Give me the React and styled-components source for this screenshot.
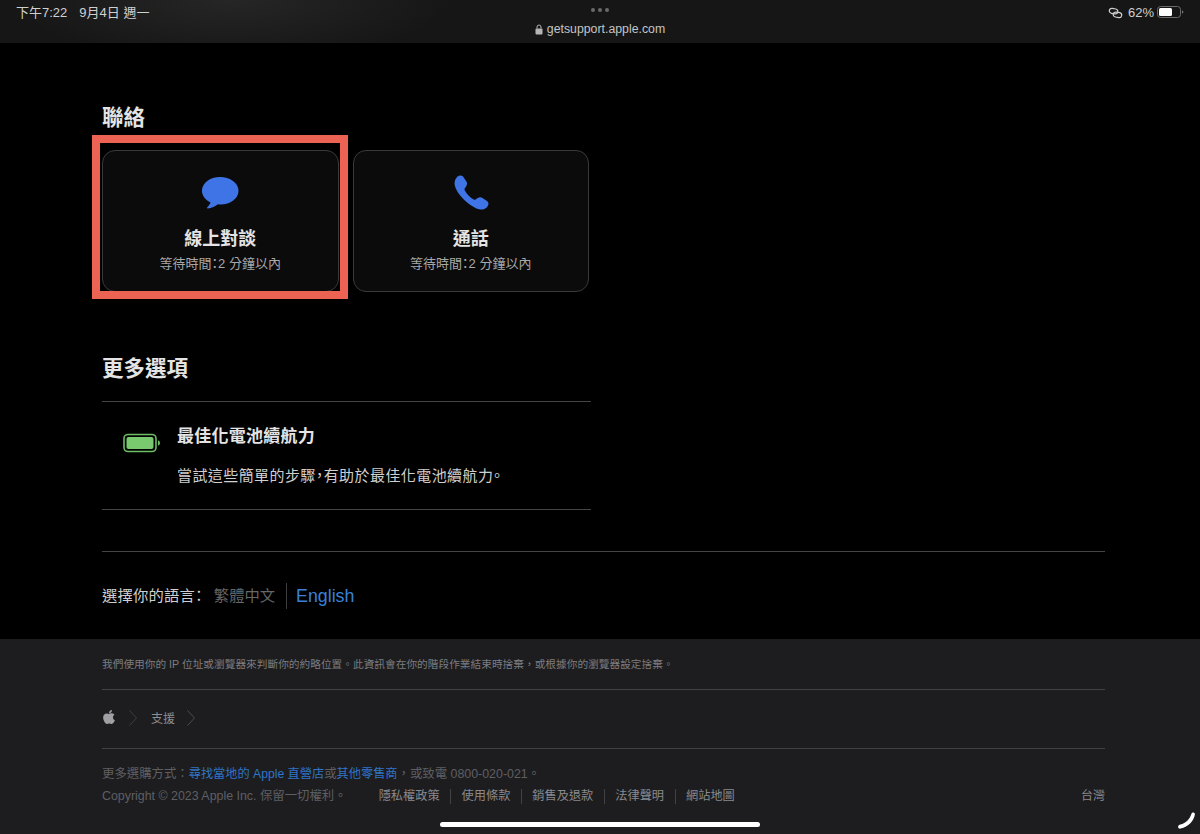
import styled, { createGlobalStyle } from 'styled-components';
import { FaApple } from 'react-icons/fa';

const GlobalStyle = createGlobalStyle`
  html, body {
    margin: 0;
    padding: 0;
    background: #000;
  }
  body {
    font-family: "Liberation Sans", "Noto Sans CJK TC", sans-serif;
  }
`;

const Page = styled.div`
  width: 1200px;
  height: 834px;
  overflow: hidden;
  position: relative;
  display: flex;
  flex-direction: column;
`;

const StatusBar = styled.div`
  height: 43px;
  flex: none;
  position: relative;
  display: flex;
  justify-content: space-between;
  padding: 5px 16px 0 16px;
  box-sizing: border-box;
  color: #d0d0d0;
  font-size: 13px;
  line-height: 15px;
  background: radial-gradient(ellipse 220px 60px at 230px 0, #262626 0%, #161616 100%);
`;

const Clock = styled.div`
  display: flex;
  gap: 12px;
  white-space: pre;
`;

const StatusRight = styled.div`
  display: flex;
  align-items: flex-start;
  gap: 3px;
  font-size: 13px;
`;

const Center = styled.div`
  position: absolute;
  left: 0;
  right: 0;
  top: 8px;
  display: flex;
  flex-direction: column;
  align-items: center;
`;

const Dots = styled.div`
  display: flex;
  gap: 3px;
  height: 7px;
  & > i {
    width: 4px;
    height: 4px;
    border-radius: 50%;
    background: #6a6a6a;
  }
`;

const Url = styled.div`
  display: flex;
  align-items: center;
  gap: 4px;
  margin-top: 7px;
  color: #c4c4c4;
  font-size: 12.3px;
  line-height: 14px;
`;

const Main = styled.main`
  flex: 1;
  background: #000;
  padding: 60px 95px 0 102px;
`;

const SectionTitle = styled.h2`
  margin: 0;
  color: #e4e4e4;
  font-size: 21.5px;
  line-height: 30px;
  font-weight: 700;
`;

const Cards = styled.div`
  display: flex;
  gap: 14px;
  margin: 17px 0 62px;
`;

const Card = styled.div`
  position: relative;
  width: 236.5px;
  height: 142px;
  box-sizing: border-box;
  border: 1px solid #3a3a3a;
  border-radius: 13px;
  background: #0b0b0b;
  display: flex;
  flex-direction: column;
  align-items: center;
  padding-top: 23px;
`;

const IconSlot = styled.div`
  height: 38px;
  display: flex;
  align-items: center;
  justify-content: center;
`;

const CardTitle = styled.div`
  margin-top: 15px;
  color: #e4e4e4;
  font-size: 18px;
  line-height: 24px;
  font-weight: 700;
`;

const CardSub = styled.div`
  margin-top: 4px;
  color: #a8a8a8;
  font-size: 13px;
  line-height: 18px;
  font-feature-settings: "palt";
`;

const Highlight = styled.div`
  position: absolute;
  left: -11px;
  top: -16px;
  width: 256px;
  height: 164px;
  box-sizing: border-box;
  border: 8px solid #ec6353;
  pointer-events: none;
`;

const OptionList = styled.div`
  width: 489px;
  margin-top: 17px;
  border-top: 1px solid #444;
  border-bottom: 1px solid #444;
  height: 109px;
  box-sizing: border-box;
  display: flex;
`;

const OptionIcon = styled.div`
  width: 75px;
  flex: none;
  padding: 31px 0 0 21px;
  box-sizing: border-box;
`;

const OptionBody = styled.div`
  padding-top: 24px;
`;

const OptionTitle = styled.div`
  color: #e4e4e4;
  font-size: 17px;
  line-height: 22px;
  letter-spacing: 0.25px;
  font-weight: 700;
`;

const OptionText = styled.div`
  margin-top: 17px;
  color: #cfcfcf;
  font-size: 15px;
  line-height: 22px;
  letter-spacing: 0.42px;
  font-feature-settings: "palt";
`;

const LanguageRow = styled.div`
  margin-top: 41px;
  border-top: 1px solid #444;
  padding-top: 31px;
  display: flex;
  align-items: center;
  font-size: 15.3px;
  line-height: 26px;
  color: #cfcfcf;
`;

const LangLabel = styled.span`
  font-feature-settings: "palt";
  letter-spacing: 0.2px;
`;

const LangCurrent = styled.span`
  margin-left: 11px;
  padding-right: 11px;
  color: #666;
  border-right: 1px solid #3c3c3c;
`;

const LangLink = styled.span`
  margin-left: 9px;
  color: #3a80d8;
  font-size: 17.8px;
`;

const Footer = styled.footer`
  height: 195px;
  flex: none;
  background: #1d1d1f;
  padding: 0 95px 0 102px;
  font-size: 11px;
  color: #6e6e73;
`;

const Notice = styled.div`
  height: 51px;
  padding-top: 18px;
  box-sizing: border-box;
  line-height: 15px;
  color: #7c7c80;
  font-size: 10.7px;
  border-bottom: 1px solid #424245;
`;

const Crumbs = styled.div`
  height: 59px;
  box-sizing: border-box;
  display: flex;
  align-items: center;
  gap: 11px;
  padding-bottom: 3px;
  border-bottom: 1px solid #424245;
  color: #8e8e92;
  font-size: 12px;
`;

const AppleMark = styled(FaApple)`
  margin-left: -1px;
  margin-right: 1px;
  margin-top: -2px;
  color: #a0a0a4;
`;

const CrumbLabel = styled.span`
  margin: 0 1px 0 3px;
`;

const Legal = styled.div`
  margin-top: 18px;
  line-height: 15px;
  font-size: 12.4px;
  color: #5f5f63;
`;

const FooterLink = styled.span`
  color: #2f75c8;
  font-size: 12.2px;
`;

const LegalRow = styled.div`
  margin-top: 7px;
  display: flex;
  align-items: center;
`;

const LegalLinks = styled.div`
  display: flex;
  margin-left: 32px;
  flex: 1;
  font-size: 12.2px;
`;

const LegalLink = styled.span`
  color: #8a8a8e;
  padding: 0 10.5px;
  border-left: 1px solid #424245;
  &:first-child {
    border-left: none;
    padding-left: 0;
  }
`;

const Region = styled.span`
  color: #8a8a8e;
  font-size: 12px;
`;

const HomeBar = styled.div`
  position: absolute;
  left: 440px;
  bottom: 7px;
  width: 320px;
  height: 5px;
  border-radius: 3px;
  background: #fff;
`;

const Corner = styled.svg`
  position: absolute;
  right: 4px;
  bottom: 5px;
`;

const LinkSvg = styled.svg`
  margin: 1px 2px 0 0;
`;

const BubbleIcon = () => (
  <svg width="38" height="35" viewBox="0 0 40 36">
    <path
      fill="#3f74e6"
      d="M20 0.5C9.5 0.5 1 7 1 15c0 5.2 3.6 9.8 9 12.300c-.6 2-2 3.900-3.400 5.200-.5.500-.2 1.300.5 1.200 4-.3 8-1.800 10.700-4.300 .9.100 1.800.2 2.700.2 10.500 0 19-6.500 19-14.600S30.500.5 20 .5z"
    />
  </svg>
);

const PhoneIcon = () => (
  <svg width="36" height="36" viewBox="-1 0 36 36">
    <path
      fill="#3f74e6"
      d="M3.300 1.800C5 .3 7.600 0 9 1.600l3.400 5c1 1.500.8 3.200-.2 4.600l-1.500 2.200c-.4.600-.4 1.100 0 1.800 1.900 3.500 5.300 7.200 9 9.300 .7.400 1.300.4 1.900 0l2.100-1.500c1.500-1 3.300-1.100 4.800-.1l4.800 3.300c1.700 1.300 1.500 3.700 0 5.500-1.500 1.800-3.800 3.100-6.300 2.900C17.500 33.800 1.600 19 .6 9.300.3 6.300 1.500 3.500 3.300 1.800z"
    />
  </svg>
);

const BatteryIcon = () => (
  <svg width="38" height="20" viewBox="0 0 38 20">
    <rect x="1" y="1.500" width="32" height="17" rx="4" fill="none" stroke="#6cbf62" strokeWidth="1.600" />
    <rect x="3.500" y="4" width="27" height="12" rx="2" fill="#79c96f" />
    <path d="M35 7.500c1.500.3 2 1.300 2 2.500s-.5 2.200-2 2.500z" fill="#6cbf62" />
  </svg>
);

const LinkIcon = () => (
  <LinkSvg width="15" height="14" viewBox="0 0 15 14">
    <g fill="none" stroke="#cfcfcf" strokeWidth="1.200" transform="rotate(10 7.500 7)">
      <rect x="1" y="3" width="8.500" height="5" rx="2.500" />
      <rect x="5.500" y="6" width="8.500" height="5" rx="2.500" />
    </g>
  </LinkSvg>
);

const SmallBattery = () => (
  <svg width="27" height="14" viewBox="0 0 27 14">
    <rect x="0.500" y="1.500" width="23" height="11" rx="3" fill="none" stroke="#6b6b6b" />
    <rect x="2" y="3" width="13" height="8" rx="1.500" fill="#fff" />
    <path d="M25 5.500c1 .2 1.300.8 1.300 1.500s-.3 1.300-1.300 1.500z" fill="#777" />
  </svg>
);

const LockIcon = () => (
  <svg width="8" height="11" viewBox="0 0 8 11">
    <path d="M2 4.500V3a2 2 0 0 1 4 0v1.500" fill="none" stroke="#b5b5b5" />
    <rect x="0.500" y="4.500" width="7" height="6" rx="1" fill="#b5b5b5" />
  </svg>
);

const Chevron = ({ color = '#3f3f42' }) => (
  <svg width="8" height="16" viewBox="0 0 8 16">
    <path d="M.5 .5l7 7.500-7 7.500" fill="none" stroke={color} strokeWidth="1" />
  </svg>
);

const CornerStroke = () => (
  <Corner width="18" height="17" viewBox="0 0 18 17">
    <path
      fill="#fff"
      d="M14.500 .6c1.200-.6 2.600.3 2.400 1.700-.9 6.500-6.500 12.700-14.200 14.300-1.500.3-2.700-.5-2.600-1.900.1-1.200 1-1.900 2.300-2.200 5.500-1.300 9.300-5.500 11-10.600 .2-.6.500-1 1.100-1.300z"
    />
  </Corner>
);

const WAIT_TEXT = '等待時間：2 分鐘以內';

function App() {
  return (
    <Page>
      <GlobalStyle />
      <StatusBar>
        <Clock>
          <span>下午7:22</span>
          <span>9月4日 週一</span>
        </Clock>
        <Center>
          <Dots><i /><i /><i /></Dots>
          <Url><LockIcon />getsupport.apple.com</Url>
        </Center>
        <StatusRight>
          <LinkIcon />
          <span>62%</span>
          <SmallBattery />
        </StatusRight>
      </StatusBar>

      <Main>
        <SectionTitle>聯絡</SectionTitle>
        <Cards>
          <Card>
            <IconSlot><BubbleIcon /></IconSlot>
            <CardTitle>線上對談</CardTitle>
            <CardSub>{WAIT_TEXT}</CardSub>
            <Highlight />
          </Card>
          <Card>
            <IconSlot><PhoneIcon /></IconSlot>
            <CardTitle>通話</CardTitle>
            <CardSub>{WAIT_TEXT}</CardSub>
          </Card>
        </Cards>

        <SectionTitle>更多選項</SectionTitle>
        <OptionList>
          <OptionIcon><BatteryIcon /></OptionIcon>
          <OptionBody>
            <OptionTitle>最佳化電池續航力</OptionTitle>
            <OptionText>嘗試這些簡單的步驟，有助於最佳化電池續航力。</OptionText>
          </OptionBody>
        </OptionList>

        <LanguageRow>
          <LangLabel>選擇你的語言：</LangLabel>
          <LangCurrent>繁體中文</LangCurrent>
          <LangLink>English</LangLink>
        </LanguageRow>
      </Main>

      <Footer>
        <Notice>我們使用你的 IP 位址或瀏覽器來判斷你的約略位置。此資訊會在你的階段作業結束時捨棄，或根據你的瀏覽器設定捨棄。</Notice>
        <Crumbs>
          <AppleMark size={16} />
          <Chevron />
          <CrumbLabel>支援</CrumbLabel>
          <Chevron color="#4c4c50" />
        </Crumbs>
        <Legal>
          <div>
            更多選購方式：<FooterLink>尋找當地的 Apple 直營店</FooterLink>或<FooterLink>其他零售商</FooterLink>，或致電 0800-020-021。
          </div>
          <LegalRow>
            <span>Copyright © 2023 Apple Inc. 保留一切權利。</span>
            <LegalLinks>
              <LegalLink>隱私權政策</LegalLink>
              <LegalLink>使用條款</LegalLink>
              <LegalLink>銷售及退款</LegalLink>
              <LegalLink>法律聲明</LegalLink>
              <LegalLink>網站地圖</LegalLink>
            </LegalLinks>
            <Region>台灣</Region>
          </LegalRow>
        </Legal>
      </Footer>

      <HomeBar />
      <CornerStroke />
    </Page>
  );
}

export default App;
